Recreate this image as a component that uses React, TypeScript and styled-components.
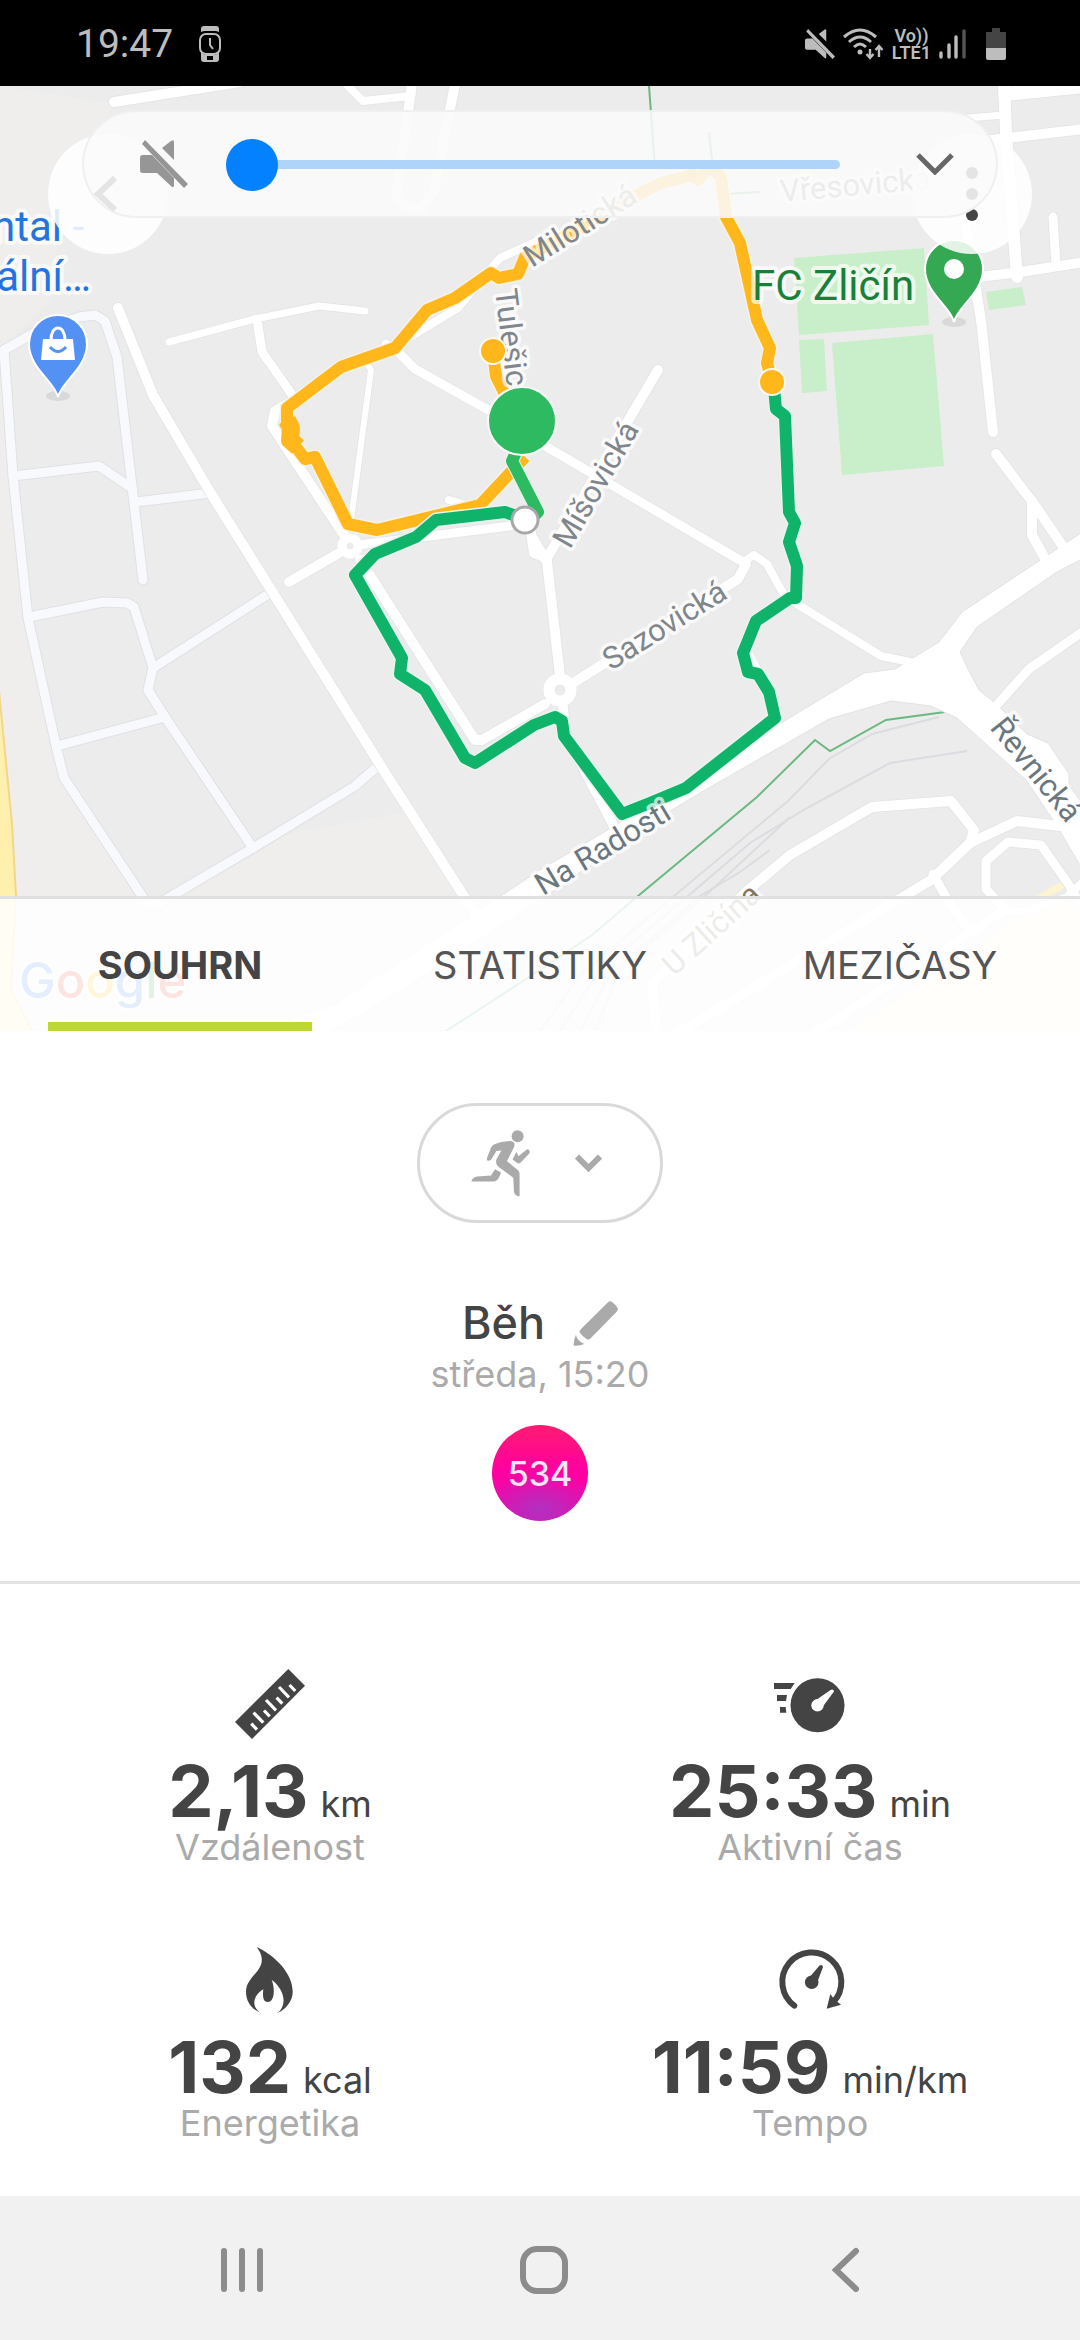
import React from "react";
import styled, { createGlobalStyle } from "styled-components";

const GlobalStyle = createGlobalStyle`
  *, *::before, *::after { box-sizing: border-box; }
  html, body { margin: 0; padding: 0; background: #ffffff; }
  button { border: 0; padding: 0; background: none; font: inherit; color: inherit; cursor: pointer; }
  svg { display: block; flex: none; }
`;

const display = `"Inter", "Open Sans", sans-serif`;
const system = `"Roboto", "Noto Sans", sans-serif`;

const Screen = styled.div`
  display: flex;
  flex-direction: column;
  min-height: 100vh;
  background: #ffffff;
  color: #444444;
  font-family: ${display};
`;

/* ---------- status bar ---------- */

const StatusBar = styled.header`
  display: flex;
  align-items: center;
  justify-content: space-between;
  height: 86px;
  padding: 2px 74px 0 76px;
  background: #000000;
  color: #bdbdbd;
  font-family: ${system};
`;

const StatusGroup = styled.div<{ $gap: number }>`
  display: flex;
  align-items: center;
  gap: ${(p) => p.$gap}px;
`;

const Clock = styled.time`
  font-size: 39px;
  line-height: 48px;
`;

const Carrier = styled.span`
  display: flex;
  flex-direction: column;
  align-items: center;
  font-size: 18px;
  line-height: 17px;
  font-weight: 600;
`;

/* ---------- map ---------- */

const MapSection = styled.section`
  position: relative;
  overflow: hidden;
  background: #ececec;
`;

const MapDrawing = styled.svg`
  width: 100%;
  height: auto;
`;

const RoundButton = styled.button<{ $side: "left" | "right" }>`
  position: absolute;
  top: 48px;
  ${(p) => p.$side}: 48px;
  display: flex;
  align-items: center;
  justify-content: center;
  width: 120px;
  height: 120px;
  border-radius: 50%;
  background: rgba(255, 255, 255, 0.86);
`;

const VolumePanel = styled.div`
  position: absolute;
  top: 24px;
  left: 82px;
  right: 82px;
  display: flex;
  align-items: center;
  height: 108px;
  padding: 0 42px 0 56px;
  border: 2px solid rgba(238, 238, 238, 0.9);
  border-radius: 54px;
  background: rgba(251, 251, 251, 0.88);
`;

const VolumeSlider = styled.input`
  appearance: none;
  flex: 1;
  min-width: 0;
  height: 52px;
  margin: 0 76px 0 38px;
  background: transparent;

  &::-webkit-slider-runnable-track {
    height: 9px;
    border-radius: 5px;
    background: #aed4fa;
  }
  &::-webkit-slider-thumb {
    appearance: none;
    width: 52px;
    height: 52px;
    margin-top: -21px;
    border-radius: 50%;
    background: #0381fe;
  }
`;

const Tabs = styled.nav`
  position: absolute;
  left: 0;
  right: 0;
  bottom: 0;
  display: flex;
  height: 135px;
  border-top: 3px solid #e0e0e0;
  background: rgba(255, 255, 255, 0.86);
`;

const Tab = styled.button<{ $active?: boolean }>`
  flex: 1;
  margin: 0 48px;
  border-top: 9px solid transparent;
  border-bottom: 9px solid ${(p) => (p.$active ? "#bdd831" : "transparent")};
  color: ${(p) => (p.$active ? "#444444" : "#555555")};
  font-size: 38px;
  font-weight: ${(p) => (p.$active ? 700 : 400)};
  white-space: nowrap;
`;

/* ---------- summary ---------- */

const Summary = styled.section`
  display: flex;
  flex-direction: column;
  align-items: center;
  padding: 72px 0 60px;
  border-bottom: 3px solid #e2e2e2;
`;

const ActivityButton = styled.button`
  display: flex;
  align-items: center;
  justify-content: center;
  gap: 44px;
  width: 246px;
  height: 120px;
  padding-right: 8px;
  border: 3px solid #d9d9d9;
  border-radius: 60px;
`;

const TitleRow = styled.div`
  display: flex;
  align-items: center;
  gap: 28px;
  height: 58px;
  margin-top: 71px;
`;

const Title = styled.h1`
  margin: 0;
  font-size: 45px;
  line-height: 58px;
  font-weight: 500;
`;

const Muted = styled.p`
  margin: 0;
  color: #aaaaaa;
  font-size: 36px;
  line-height: 44px;
`;

const Score = styled.div`
  display: flex;
  align-items: center;
  justify-content: center;
  width: 96px;
  height: 96px;
  margin-top: 29px;
  border-radius: 50%;
  background:
    radial-gradient(ellipse 60px 38px at 50% 88%, #b030c0, rgba(176, 48, 192, 0)),
    linear-gradient(#ff1b70, #ff00a2 48%, #e80cae);
  color: #f8e4f3;
  font-size: 34px;
  font-weight: 500;
`;

/* ---------- stats ---------- */

const Stats = styled.section`
  display: grid;
  grid-template-columns: 1fr 1fr;
  row-gap: 75px;
  padding: 84px 0 51px;
`;

const StatCell = styled.div`
  display: flex;
  flex-direction: column;
  align-items: center;
`;

const StatValue = styled.p`
  display: flex;
  align-items: baseline;
  gap: 12px;
  height: 68px;
  margin: 17px 0 0;
  font-size: 72px;
  line-height: 68px;
  font-weight: 700;
  white-space: nowrap;
`;

const Unit = styled.span`
  font-size: 36px;
  line-height: 36px;
  font-weight: 400;
`;

/* ---------- system navigation ---------- */

const SystemNav = styled.nav`
  display: flex;
  justify-content: center;
  height: 144px;
  margin-top: auto;
  padding: 4px 0 0 8px;
  background: #f1f1f1;
`;

const NavButton = styled.button`
  display: flex;
  flex: 0 1 302px;
  align-items: center;
  justify-content: center;
`;

/* ---------- icons ---------- */

const MuteIcon = ({ size, color }: { size: number; color: string }) => (
  <svg width={size} height={size} viewBox="0 0 48 48" fill={color} aria-hidden="true">
    <path d="M22 8 31 1Q34 -1 34 2V20Z" />
    <path d="M0 18Q0 15 3 15H12L34 38V45Q34 49 31 46L17 33H3Q0 33 0 30Z" />
    <path d="M2 4 5 0 48 44 44 48Z" />
  </svg>
);

const WatchIcon = () => (
  <svg width="22" height="36" viewBox="0 0 22 36" fill="#bdbdbd" aria-hidden="true">
    <path d="M2 6V3Q2 0 5 0H17Q20 0 20 3V6Q18 5 16 5H6Q4 5 2 6Z" />
    <rect x="1" y="8" width="20" height="20" rx="6" fill="none" stroke="#bdbdbd" strokeWidth="2" />
    <path d="M2 26Q4 29 8 29H14Q18 29 20 26V33Q20 36 17 36H5Q2 36 2 33ZM8 30V34H14V30Z" fillRule="evenodd" />
    <path d="M11 12V19L14 23" fill="none" stroke="#bdbdbd" strokeWidth="2" />
  </svg>
);

const WifiIcon = () => (
  <svg width="41" height="32" viewBox="0 0 41 32" fill="none" stroke="#bdbdbd" strokeWidth="3" aria-hidden="true">
    <path d="M1 9Q17 -5 33 9M6 14Q17 4 28 14M11 19Q17 13 23 19" />
    <circle cx="17" cy="24" r="2.5" fill="#bdbdbd" stroke="none" />
    <path d="M27 21V29M23.5 26 27 30 30.500 26M36 29V19M32.500 22 36 18 39.500 22" strokeWidth="2.400" />
  </svg>
);

const SignalIcon = () => (
  <svg width="27" height="30" viewBox="0 0 27 30" strokeWidth="3.400" strokeLinecap="round" stroke="#bdbdbd" aria-hidden="true">
    <path d="M2 24V28M10 16V28M17 8V28" />
    <path d="M25 2V28" stroke="#555555" />
  </svg>
);

const BatteryIcon = () => (
  <svg width="20" height="32" viewBox="0 0 20 32" aria-hidden="true">
    <path d="M6 0H14V4H20V20H0V4H6Z" fill="#444444" />
    <path d="M0 20H20V30Q20 32 18 32H2Q0 32 0 30Z" fill="#bdbdbd" />
  </svg>
);

const RunnerIcon = () => (
  <svg width="60" height="67" viewBox="0 0 180 202" fill="#aaaaaa" aria-hidden="true">
    <circle cx="140" cy="19" r="18" />
    <path d="M110 34Q128 31 131 43Q131 50 126 58L108 94L142 122Q146 125 146 133V200Q132 199 129 186L127 144L84 112Q72 103 76 90L91 62L76 63L61 88Q56 95 47 91Q47 84 51 76L60 53Q63 46 72 42Q90 34 110 34Z" />
    <path d="M72 118L90 128Q84 145 79 150Q75 155 68 155H1Q2 144 18 140L60 137Z" />
    <path d="M136 66Q140 68 142 79L169 58Q178 58 176 70L150 97Q144 104 138 99L125 89Z" />
  </svg>
);

const PencilIcon = () => (
  <svg width="45" height="45" viewBox="0 0 135 135" fill="#aaaaaa" aria-hidden="true">
    <path d="M105 4Q111 -2 117 3Q130 12 134 22Q137 26 131 32L53 112Q47 118 41 114Q25 104 20 94Q19 89 24 84Z" />
    <path d="M9 101Q10 117 34 129Q20 135 4 134Q1 134 2 130Q3 112 9 101Z" />
  </svg>
);

const RulerIcon = () => (
  <svg width="72" height="72" viewBox="0 0 72 72" aria-hidden="true">
    <path d="M54.300 1 71 17.700 18 71 1 54Z" fill="#444444" />
    <path
      d="M19.500 44.700 29.300 54.700M32 32 42 42.300M45 19 55 29.300M17.300 55.600 23 61.700M30 42.500 35.700 48.300M42.600 29.700 48.300 35.700M55.500 17 61.300 23"
      stroke="#ffffff"
      strokeWidth="3.200"
    />
  </svg>
);

const ActiveTimeIcon = () => (
  <svg width="72" height="72" viewBox="0 0 72 72" fill="#444444" aria-hidden="true">
    <path d="M0 15H20.700L16.700 21H0ZM3 27H13L12 33H3ZM6 39H11.700L12.300 44.700H6Z" />
    <circle cx="43.500" cy="37.300" r="27" />
    <circle cx="43.500" cy="37.300" r="6.200" fill="#ffffff" />
    <path d="M40 33.500 56.500 22Q59.500 20.500 60 23.500L48.500 39Z" fill="#ffffff" />
  </svg>
);

const FlameIcon = () => (
  <svg width="72" height="72" viewBox="0 0 72 72" fill="#444444" aria-hidden="true">
    <path d="M22.700 3C42 12 58.700 30 58.700 47.700C58.700 57 52 65 44 68.700C55 59 48 43 37.700 36C41 44 41 58 33.500 58C29 58 28.500 52 29.300 45.300C20 51 16 62 26.700 68.700C17 65 12 57 12 47.700C12 32 32 27 27 11C26 7.500 24 5 22.700 3Z" />
  </svg>
);

const PaceIcon = () => (
  <svg width="72" height="72" viewBox="0 0 72 72" fill="#444444" aria-hidden="true">
    <path d="M20.300 61.700A29.500 29.500 0 1 1 59 58.500" fill="none" stroke="#444444" strokeWidth="6" strokeLinecap="round" />
    <path d="M52.700 64.700 56.300 50 60 55 67 60.700Z" />
    <circle cx="37.700" cy="38.300" r="6.800" />
    <path d="M34.500 34.500 45.500 21.500Q48.500 20 49 23L43 39Z" />
  </svg>
);

const ShortChevron = () => (
  <svg width="27" height="18" viewBox="0 0 27 18" aria-hidden="true">
    <path d="M2 2.500 13.500 14 25 2.500" fill="none" stroke="#aaaaaa" strokeWidth="6" />
  </svg>
);

/* ---------- map drawing ---------- */

const whiteRoads: Array<[number, string]> = [
  [10, "M118 308 153 395 210 492 379 763 467 901 480 920"],
  [7, "M169 342 255 319 319 306 365 311"],
  [9, "M257 319 262 352 293 396"],
  [10, "M287 404 275 411 272 426 344 535"],
  [10, "M339 553 289 582"],
  [6, "M366 362 371 370 351 520"],
  [9, "M386 344 398 352 415 369 492 412 547 447 743 562"],
  [8, "M395 346 458 308 500 258 540 240"],
  [8, "M743 562 754 555 767 564 784 595 797 604 881 656 920 664"],
  [10, "M746 564 738 579 573 683"],
  [10, "M534 540 547 562 560 676"],
  [10, "M658 370 547 558 534 553 530 525"],
  [9, "M358 545 510 526"],
  [10, "M360 560 475 740 482 740 545 704"],
  [8, "M449 500 476 508"],
  [10, "M562 700 566 735 616 830"],
  [7, "M750 655 760 674"],
  [10, "M996 454 1024 491 1032 501 1064 548"],
  [10, "M1032 501 1032 535 1048 564"],
  [9, "M1085 630 1029 669 996 706"],
  [10, "M965 217 976 290 981 320 993 432"],
  [12, "M1004 80 1006 133 1017 277"],
  [14, "M1005 94 1085 86"],
  [7, "M968 118 1003 115"],
  [10, "M991 140 1085 129"],
  [10, "M980 277 1020 272 1085 262"],
  [9, "M1053 217 1056 265"],
  [10, "M114 102 240 82"],
  [8, "M344 82 363 101 410 96"],
  [10, "M412 84 396 197 406 208 422 208 434 190 455 84"],
  [10, "M652 983 747 891 790 855 872 807 951 801 974 830 970 843"],
  [10, "M652 983 657 1035"],
  [10, "M670 1038 931 880 970 843 1017 821 1060 826"],
  [9, "M933 874 946 897 970 932"],
  [9, "M810 1036 1005 910 986 889 986 861 1008 842 1041 845 1067 882 1085 912"],
  [8, "M1005 910 1024 912 1067 897 1085 880"],
];

const lotRoads = [
  "M4 350 32 334 79 317 95 315 105 321 117 357 134 503 143 580",
  "M4 350 13 476 28 618 56 746 64 778 148 905 160 905",
  "M13 476 99 466 133 489",
  "M136 502 210 493",
  "M29 617 103 602 127 603 134 607 153 668 148 690 165 717 253 848",
  "M270 593 153 668",
  "M57 746 165 717",
  "M379 765 355 786 253 848 158 904",
];

const rails = [
  "M939 717 872 734 829 759 788 801 674 896 580 975 540 1031",
  "M967 751 890 763 805 809 750 843 688 896 600 970 560 1031",
  "M790 817 705 896 620 970 595 1031",
  "M770 850 740 872 700 896 610 975 580 1031",
];

const orangeRoute =
  "M493 351 496 376 506 396 M525 457 480 505 377 530 348 524 315 457 305 459 293 443 287 424 287 408 341 367 395 348 427 310 455 298 491 273 499 278 518 274 525 257 571 233 633 197 661 183 693 175 698 180 710 167 721 177 726 217 740 243 757 320 770 348 767 363 772 382";

const greenRoute =
  "M774 388 776 409 785 416 789 512 795 523 789 542 797 566 796 598 790 598 756 621 743 653 748 672 758 674 769 692 775 718 686 788 650 803 622 814 564 736 562 721 555 717 534 725 475 763 465 758 425 690 400 674 402 658 355 575 375 554 416 537 436 520 505 512 522 518";

const streetLabels: Array<[string, number, number, number, string]> = [
  ["Milotická", 532, 268, -32, "#80868b"],
  ["Tulešic", 495, 290, 83, "#80868b"],
  ["Míšovická", 570, 550, -60, "#80868b"],
  ["Sazovická", 611, 671, -32, "#80868b"],
  ["Na Radosti", 543, 896, -31, "#6b777f"],
  ["Řevnická", 989, 728, 51, "#6b777f"],
  ["Vřesovická", 781, 202, -5, "#80868b"],
  ["U Zličína", 674, 977, -42, "#84765f"],
];

const pinShape = "M0 53C-3 38 -29 24 -29 0A29 29 0 1 1 29 0C29 24 3 38 0 53Z";

const RouteMap = () => (
  <MapDrawing viewBox="0 86 1080 945" role="img" aria-label="Mapa trasy" fontFamily={system}>
    <rect x="0" y="86" width="1080" height="945" fill="#ececec" />
    <path d="M0 86 114 104 86 150 60 210 52 300 4 345 13 476 28 618 56 746 64 778 130 870 250 850 296 832 403 813 432 845 480 920 380 1000 293 1031 0 1031Z" fill="#efeeec" />
    <path d="M4 350 79 317 95 315 117 357 134 503 210 493 379 763 253 848 148 904 64 778 28 618Z" fill="#ececec" />
    <path d="M850 1031 980 946 1012 920 1080 890V1031Z" fill="#fff6dc" />
    <path d="M1036 896 1064 880 1068 886 1050 896Z" fill="#fff3d0" />
    <path d="M-4 660 12 824 16 896 11 990 34 1034H-4Z" fill="#fff0ae" stroke="#f3d68a" strokeWidth="2" />

    <g fill="#c9eeca">
      <path d="M794 258 924 248 929 325 799 335Z" />
      <path d="M799 340 824 339 827 391 802 393Z" />
      <path d="M832 343 933 334 944 466 842 475Z" />
      <path d="M986 292 1022 287 1026 305 989 310Z" />
    </g>

    <g fill="none" stroke="#dadce0" strokeWidth="2">
      {rails.map((d) => (
        <path key={d} d={d} />
      ))}
    </g>
    <g fill="none" stroke="#6bb881" strokeWidth="2">
      <path d="M945 712 886 720 830 751 815 740 757 797 638 896 592 935 540 970 446 1031" />
      <path d="M649 86 655 167M709 132 712 160M726 194 760 192" />
    </g>

    <g fill="none" strokeLinejoin="round" strokeLinecap="round">
      {lotRoads.map((d) => (
        <path key={d} d={d} stroke="#dfe1e5" strokeWidth="11" />
      ))}
      {lotRoads.map((d) => (
        <path key={d} d={d} stroke="#f7f9fc" strokeWidth="9" />
      ))}
      {whiteRoads.map(([w, d]) => (
        <path key={d} d={d} stroke="#e2e3e5" strokeWidth={w + 1.500} />
      ))}
    </g>
    <path
      d="M540 870 611 828 781 723 864 673 895 669 939 642 962 612 1084 531V558L1057 572 977 627 960 652 969 671 979 690 995 703 1027 734 1048 743 1069 774V785L1084 806V872L1057 826 1026 780 957 718 931 706 891 701 829 719 712 786 660 817 540 900 406 987 372 1008 325 1034 280 1034 293 1018 334 1005 472 915Z"
      fill="#ffffff"
      stroke="#e2e3e5"
      strokeWidth="1"
    />
    <g fill="none" stroke="#ffffff" strokeLinejoin="round" strokeLinecap="round">
      {whiteRoads.map(([w, d]) => (
        <path key={d} d={d} strokeWidth={w} />
      ))}
      <circle cx="350" cy="546" r="8" strokeWidth="9" fill="#ececec" />
      <circle cx="560" cy="690" r="11" strokeWidth="11" fill="#ececec" />
    </g>

    <g fill="none" strokeLinejoin="round">
      <path d={orangeRoute} stroke="#f6f3e6" strokeWidth="15" />
      <path d={orangeRoute} stroke="#ffb71b" strokeWidth="12" />
      <path d="M287 420 291 428 290 440 298 447" stroke="#ffb71b" strokeWidth="18" />
      <path d={greenRoute} stroke="#e6f6ee" strokeWidth="15" />
      <path d={greenRoute} stroke="#0fb36a" strokeWidth="12" />
      <path d="M517 450 512 461 538 512 530 520" stroke="#e6f6ee" strokeWidth="14" />
      <path d="M517 450 512 461 538 512 530 520" stroke="#2dba60" strokeWidth="12" />
    </g>

    <g fontSize="31" stroke="#ffffff" strokeWidth="7" strokeOpacity="0.700" strokeLinejoin="round" paintOrder="stroke">
      {streetLabels.map(([name, x, y, angle, color]) => (
        <text key={name} fill={color} transform={`translate(${x} ${y}) rotate(${angle})`}>
          {name}
        </text>
      ))}
    </g>

    <g stroke="#f8f8f8" strokeWidth="2">
      <circle cx="493" cy="351" r="13" fill="#ffb71b" />
      <circle cx="772" cy="382" r="13" fill="#ffb71b" />
      <circle cx="522" cy="421" r="34" fill="#2dba60" />
      <circle cx="525" cy="520" r="13" fill="#ffffff" stroke="#a8a8a8" strokeWidth="3" />
    </g>

    <g fontSize="42" stroke="#ffffff" strokeWidth="8" strokeOpacity="0.700" strokeLinejoin="round" paintOrder="stroke">
      <text x="752" y="300" fill="#188038">FC Zličín</text>
      <text x="84" y="241" textAnchor="end" fill="#2374e1">ntal -</text>
      <text x="91" y="291" textAnchor="end" fill="#2374e1">ální…</text>
    </g>

    <ellipse cx="58" cy="396" rx="12" ry="5" fill="#d9d9d9" />
    <g transform="translate(58 344)">
      <path d={pinShape} fill="#5491f5" stroke="#ffffff" strokeWidth="2" />
      <path d="M-15 -5H15L17 16H-17Z" fill="#ffffff" />
      <path d="M-7 -4C-7 -20 7 -20 7 -4" fill="none" stroke="#ffffff" strokeWidth="3" />
      <path d="M-8 3Q0 12 8 3" fill="none" stroke="#5491f5" strokeWidth="3" />
    </g>
    <ellipse cx="954" cy="322" rx="12" ry="5" fill="#d9d9d9" />
    <g transform="translate(954 269)">
      <path d={pinShape} fill="#34a853" stroke="#ffffff" strokeWidth="2" />
      <circle r="10" fill="#ffffff" />
    </g>

    <text x="19" y="998" fontFamily="Inter, sans-serif" fontSize="49" fontWeight="500" stroke="#ffffff" strokeWidth="5" paintOrder="stroke">
      <tspan fill="#4285f4">G</tspan>
      <tspan fill="#ea4335">o</tspan>
      <tspan fill="#fbbc04">o</tspan>
      <tspan fill="#4285f4">g</tspan>
      <tspan fill="#34a853">l</tspan>
      <tspan fill="#ea4335">e</tspan>
    </text>
  </MapDrawing>
);

/* ---------- page ---------- */

const stats = [
  { value: "2,13", unit: "km", label: "Vzdálenost", icon: <RulerIcon /> },
  { value: "25:33", unit: "min", label: "Aktivní čas", icon: <ActiveTimeIcon /> },
  { value: "132", unit: "kcal", label: "Energetika", icon: <FlameIcon /> },
  { value: "11:59", unit: "min/km", label: "Tempo", icon: <PaceIcon /> },
];

export default function App() {
  return (
    <Screen>
      <GlobalStyle />
      <StatusBar>
        <StatusGroup $gap={26}>
          <Clock>19:47</Clock>
          <WatchIcon />
        </StatusGroup>
        <StatusGroup $gap={20}>
          <StatusGroup $gap={8}>
            <MuteIcon size={30} color="#bdbdbd" />
            <WifiIcon />
            <Carrier>
              <span>Vo))</span>
              <span>LTE1</span>
            </Carrier>
            <SignalIcon />
          </StatusGroup>
          <BatteryIcon />
        </StatusGroup>
      </StatusBar>

      <MapSection>
        <RouteMap />
        <RoundButton $side="left" aria-label="Zpět">
          <svg width="40" height="36" viewBox="0 0 40 36" aria-hidden="true">
            <path d="M27 2 10 18 27 34" fill="none" stroke="#444444" strokeWidth="6" />
          </svg>
        </RoundButton>
        <RoundButton $side="right" aria-label="Další možnosti">
          <svg width="12" height="54" viewBox="0 0 12 54" fill="#444444" aria-hidden="true">
            <circle cx="6" cy="6" r="6" />
            <circle cx="6" cy="27" r="6" />
            <circle cx="6" cy="48" r="6" />
          </svg>
        </RoundButton>
        <VolumePanel>
          <button aria-label="Zapnout zvuk">
            <MuteIcon size={48} color="#969696" />
          </button>
          <VolumeSlider type="range" min={0} max={15} defaultValue={0} aria-label="Hlasitost" />
          <button aria-label="Rozbalit">
            <svg width="38" height="22" viewBox="0 0 38 22" aria-hidden="true">
              <path d="M2 2 19 19 36 2" fill="none" stroke="#666666" strokeWidth="5" />
            </svg>
          </button>
        </VolumePanel>
        <Tabs>
          <Tab $active>SOUHRN</Tab>
          <Tab>STATISTIKY</Tab>
          <Tab>MEZIČASY</Tab>
        </Tabs>
      </MapSection>

      <Summary>
        <ActivityButton aria-label="Změnit sport">
          <RunnerIcon />
          <ShortChevron />
        </ActivityButton>
        <TitleRow>
          <Title>Běh</Title>
          <button aria-label="Upravit název">
            <PencilIcon />
          </button>
        </TitleRow>
        <Muted>středa, 15:20</Muted>
        <Score>534</Score>
      </Summary>

      <Stats>
        {stats.map((s) => (
          <StatCell key={s.label}>
            {s.icon}
            <StatValue>
              {s.value}
              <Unit>{s.unit}</Unit>
            </StatValue>
            <Muted>{s.label}</Muted>
          </StatCell>
        ))}
      </Stats>

      <SystemNav>
        <NavButton aria-label="Poslední aplikace">
          <svg width="48" height="48" viewBox="0 0 48 48" aria-hidden="true">
            <path d="M6 5V43M24 5V43M42 5V43" stroke="#8c8c8c" strokeWidth="6" strokeLinecap="round" />
          </svg>
        </NavButton>
        <NavButton aria-label="Domů">
          <svg width="48" height="48" viewBox="0 0 48 48" aria-hidden="true">
            <rect x="3" y="3" width="42" height="42" rx="14" fill="none" stroke="#8c8c8c" strokeWidth="6" />
          </svg>
        </NavButton>
        <NavButton aria-label="Zpět">
          <svg width="48" height="48" viewBox="0 0 48 48" aria-hidden="true">
            <path d="M34 5 14 24 34 43" fill="none" stroke="#8c8c8c" strokeWidth="6" strokeLinecap="round" />
          </svg>
        </NavButton>
      </SystemNav>
    </Screen>
  );
}
